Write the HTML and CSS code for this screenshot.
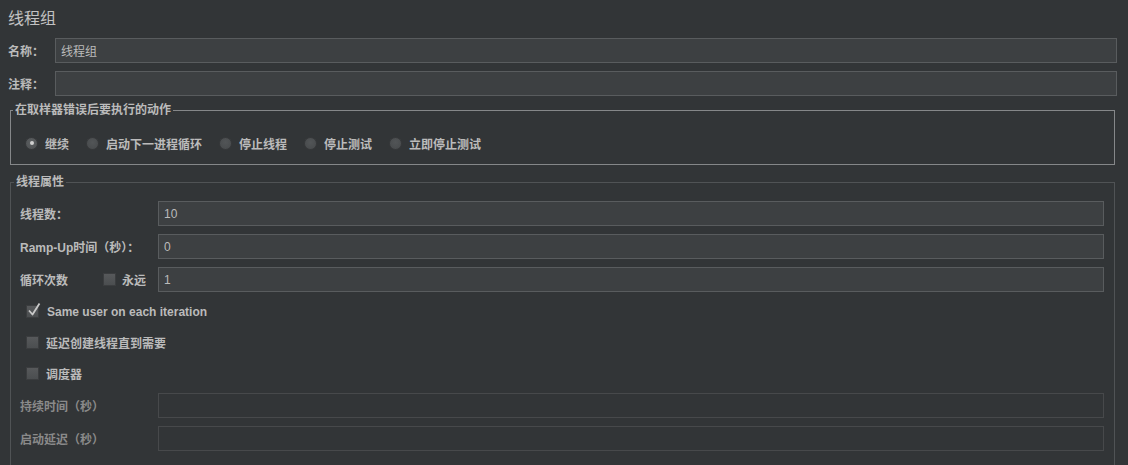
FILE: index.html
```html
<!DOCTYPE html>
<html lang="zh">
<head>
  <meta charset="UTF-8" />
  <title>线程组</title>
  <link rel="stylesheet" href="styles.css">
</head>
<body>
  <div class="panel">
    <h1 class="title">线程组</h1>

    <div class="top-row">
      <label class="lbl">名称：</label>
      <input class="txt" type="text" value="线程组" />
    </div>
    <div class="top-row">
      <label class="lbl">注释：</label>
      <input class="txt" type="text" value="" />
    </div>

    <fieldset class="group group-action">
      <legend>在取样器错误后要执行的动作</legend>
      <div class="radio-list">
        <label class="radio"><span class="dot on"></span>继续</label>
        <label class="radio"><span class="dot"></span>启动下一进程循环</label>
        <label class="radio"><span class="dot"></span>停止线程</label>
        <label class="radio"><span class="dot"></span>停止测试</label>
        <label class="radio"><span class="dot"></span>立即停止测试</label>
      </div>
    </fieldset>

    <fieldset class="group group-props">
      <legend>线程属性</legend>

      <div class="props">
        <div class="prop-row">
          <label class="lbl">线程数：</label>
          <input class="txt" type="text" value="10" />
        </div>
        <div class="prop-row">
          <label class="lbl">Ramp-Up时间（秒）：</label>
          <input class="txt" type="text" value="0" />
        </div>
        <div class="prop-row">
          <div class="lbl loop-lbl">
            <span>循环次数</span>
            <label class="forever"><span class="box"></span>永远</label>
          </div>
          <input class="txt" type="text" value="1" />
        </div>

        <div class="checks">
          <label class="check-row latin">
            <span class="box checked">
              <svg viewBox="0 0 16 16" width="16" height="16"><path d="M3 8.5 L6.5 12.5 L13.5 1.5" fill="none" stroke="#c9c9c9" stroke-width="1.8" stroke-linejoin="round"/></svg>
            </span>
            Same user on each iteration
          </label>
          <label class="check-row"><span class="box"></span>延迟创建线程直到需要</label>
          <label class="check-row"><span class="box"></span>调度器</label>
        </div>

        <div class="prop-row">
          <label class="lbl off">持续时间（秒）</label>
          <input class="txt off" type="text" value="" />
        </div>
        <div class="prop-row">
          <label class="lbl off">启动延迟（秒）</label>
          <input class="txt off" type="text" value="" />
        </div>
      </div>
    </fieldset>
  </div>
</body>
</html>
```

FILE: styles.css
```css
body {
  margin: 0;
  background-color: #323537;
  color: #bbbbbb;
  font-family: "Liberation Sans", "Noto Sans CJK SC", sans-serif;
  font-size: 12px;
  overflow: hidden;
}
.panel {
  padding: 8px 11px 0 8px;
}
.title {
  margin: 0;
  height: 22px;
  line-height: 22px;
  font-size: 16px;
  font-weight: normal;
  color: #c2c2c2;
}
.lbl {
  font-weight: bold;
  white-space: nowrap;
}
.txt {
  flex: 1;
  height: 25px;
  box-sizing: border-box;
  margin: 0;
  padding: 0 5px;
  background-color: #3d4042;
  border: 1px solid #595c5e;
  color: #bbbbbb;
  font-family: "Liberation Sans", "Noto Sans CJK SC", sans-serif;
  font-size: 12px;
  outline: none;
}
.txt.off {
  background-color: transparent;
  border-color: #47494b;
}
.lbl.off {
  color: #8a8a8a;
}

.top-row {
  display: flex;
  align-items: center;
  height: 25px;
  margin-top: 8px;
}
.top-row .lbl {
  width: 47px;
}

/* group boxes */
.group {
  margin: 0 2px 0 2px;
  padding: 0;
  min-width: 0;
}
.group legend {
  margin-left: 2px;
  padding: 0 2px;
  line-height: 16px;
  font-weight: bold;
}
.group-action {
  margin-top: 6px;
  padding-bottom: 11px;
  border: 1px solid #858789;
}
.group-props {
  margin-top: 9px;
  border: 1px solid #505355;
}
.group-props legend {
  margin-left: 3px;
}

/* radios */
.radio-list {
  display: flex;
  align-items: center;
  height: 20px;
  margin-top: 15px;
  padding-left: 14px;
}
.radio {
  display: flex;
  align-items: center;
  gap: 7px;
  margin-right: 17px;
  font-weight: bold;
}
.dot {
  width: 13px;
  height: 13px;
  box-sizing: border-box;
  border-radius: 50%;
  background: radial-gradient(circle at 50% 40%, #525557, #46494b);
  border: 1px solid #37393b;
  display: flex;
  align-items: center;
  justify-content: center;
}
.dot.on {
  background: radial-gradient(circle at 50% 40%, #5c5f61, #4d5052);
}
.dot.on::after {
  content: "";
  width: 4px;
  height: 4px;
  border-radius: 50%;
  background-color: #d0d0d0;
}

/* thread properties */
.props {
  padding: 11px 10px 20px 9px;
}
.prop-row {
  display: flex;
  align-items: center;
  height: 25px;
  margin-bottom: 8px;
}
.prop-row .lbl {
  width: 138px;
}
.loop-lbl {
  display: flex;
  align-items: center;
}
.forever {
  display: flex;
  align-items: center;
  gap: 6px;
  margin-left: auto;
  margin-right: 12px;
}

.checks {
  margin-top: -4px;
  margin-bottom: 4px;
}
.check-row {
  display: flex;
  align-items: center;
  gap: 7px;
  height: 31px;
  padding-left: 6px;
  font-weight: bold;
}
.check-row.latin {
  gap: 8px;
}
.box {
  position: relative;
  flex: none;
  width: 13px;
  height: 13px;
  box-sizing: border-box;
  background: linear-gradient(#57595b, #4b4e50);
  border: 1px solid #3b3d3f;
}
.box svg {
  position: absolute;
  left: -1px;
  top: -4px;
}
```
